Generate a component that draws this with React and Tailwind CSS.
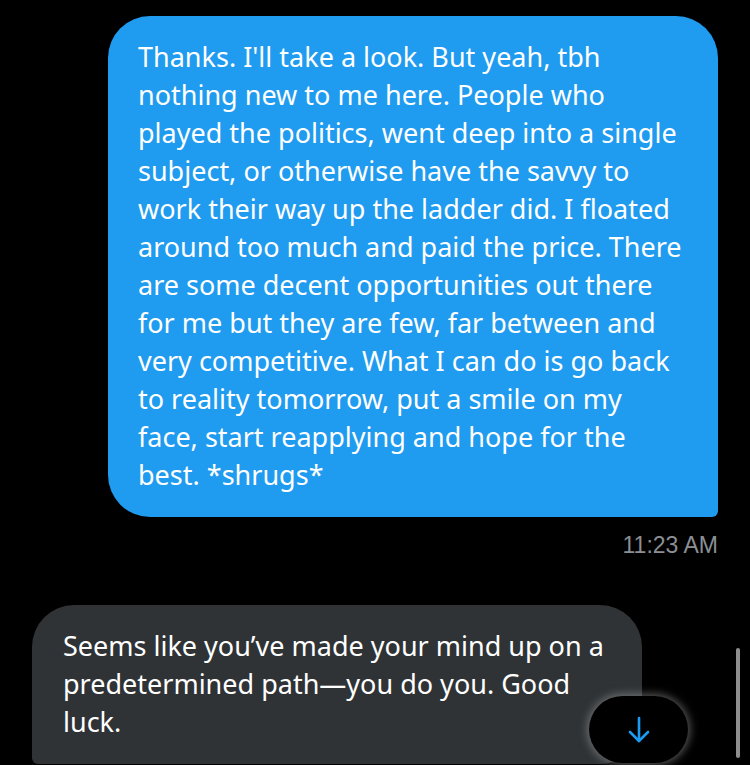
import React from "react";

const sent = [
  "Thanks. I'll take a look. But yeah, tbh",
  "nothing new to me here. People who",
  "played the politics, went deep into a single",
  "subject, or otherwise have the savvy to",
  "work their way up the ladder did. I floated",
  "around too much and paid the price. There",
  "are some decent opportunities out there",
  "for me but they are few, far between and",
  "very competitive. What I can do is go back",
  "to reality tomorrow, put a smile on my",
  "face, start reapplying and hope for the",
  "best. *shrugs*",
];

const received = [
  "Seems like you\u2019ve made your mind up on a",
  "predetermined path\u2014you do you. Good",
  "luck.",
];

const App = () => {
  return (
    <div className="relative h-[765px] w-[750px] overflow-hidden bg-black font-['Noto_Sans',sans-serif]">
      {/* Sent message */}
      <div className="flex flex-col items-end pr-[32px] pt-[16px]">
        <div className="w-[610px] rounded-[42px] rounded-br-[6px] bg-[#1f9bef] pb-[23px] pl-[30px] pr-[20px] pt-[22px] text-[27px] leading-[38px] text-white">
          {sent.map((line, i) => (
            <div key={i} className="whitespace-nowrap">
              {line}
            </div>
          ))}
        </div>
        <div className="mt-[13px] font-['Liberation_Sans',sans-serif] text-[23px] leading-[30px] text-[#8b8f94]">
          11:23 AM
        </div>
      </div>

      {/* Received message */}
      <div className="pl-[32px] pt-[45px]">
        <div className="w-[610px] rounded-[42px] rounded-bl-[6px] bg-[#2f3336] pb-[23px] pl-[31px] pr-[20px] pt-[22px] text-[27px] leading-[38px] text-white">
          {received.map((line, i) => (
            <div key={i} className="whitespace-nowrap">
              {line}
            </div>
          ))}
        </div>
      </div>

      {/* Scroll to bottom button */}
      <button className="absolute left-[589px] top-[696px] flex h-[67px] w-[99px] items-center justify-center rounded-full bg-black shadow-[0_0_8px_2px_rgba(160,160,160,0.55)]">
        <svg width="22" height="27" viewBox="0 0 22 27" fill="none" stroke="#1d9bf0" strokeWidth="2.6" strokeLinecap="round" strokeLinejoin="round">
          <path d="M11 2v23" />
          <path d="M2 16l9 9 9-9" />
        </svg>
      </button>

      {/* Scrollbar */}
      <div className="absolute left-[736px] top-[648px] h-[110px] w-[4px] rounded-full bg-[#8e8e8e]" />
    </div>
  );
};

export default App;
